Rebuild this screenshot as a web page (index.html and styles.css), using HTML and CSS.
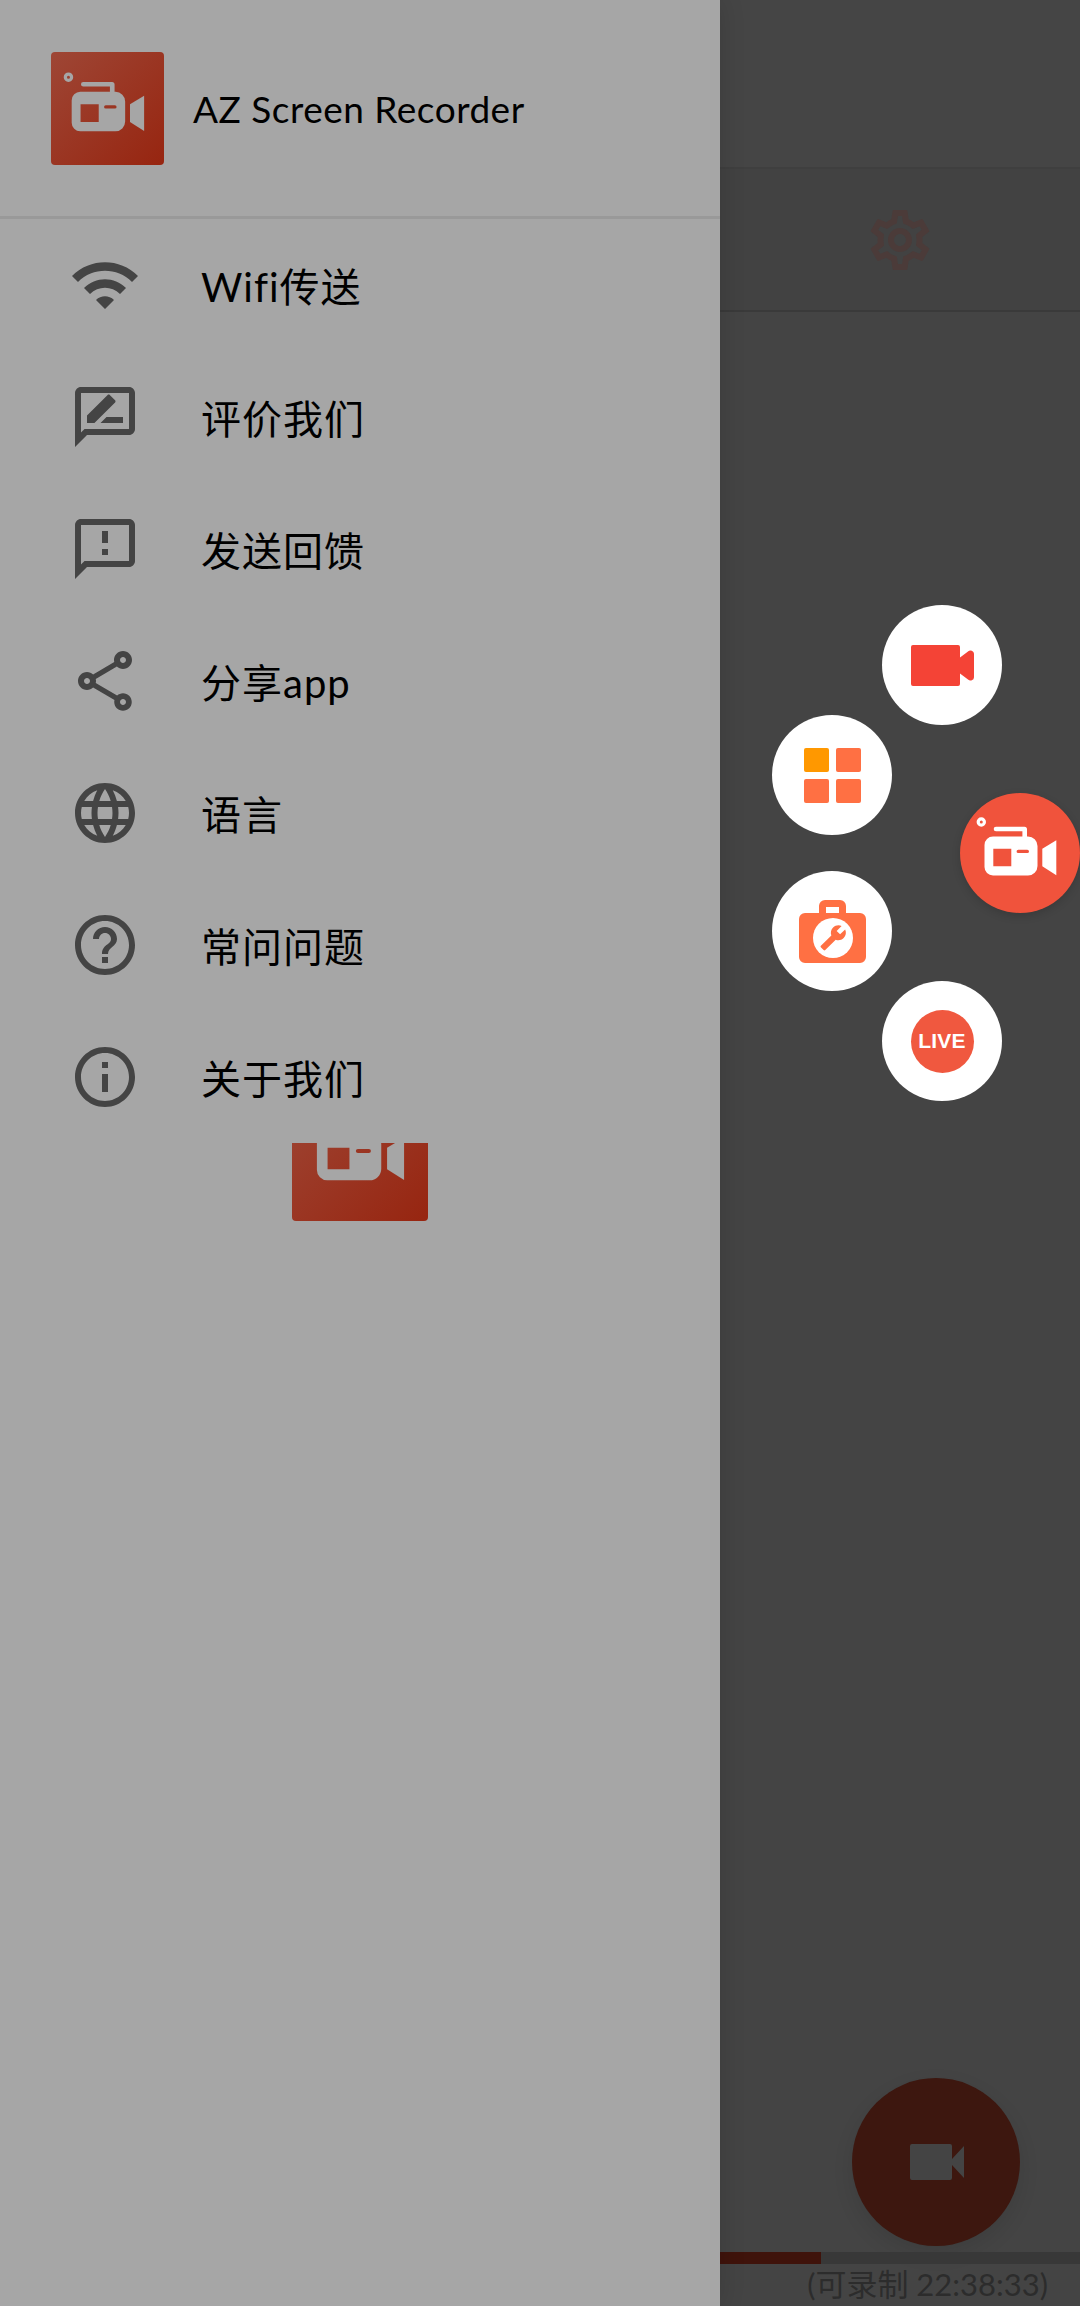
FILE: index.html
```html
<!DOCTYPE html>
<html lang="zh-CN">
  <head>
    <meta charset="UTF-8" />
    <meta name="viewport" content="width=device-width, initial-scale=1.0" />
    <title>AZ Screen Recorder</title>
    <link rel="stylesheet" href="styles.css">
  </head>
  <body>
    <svg class="defs" aria-hidden="true">
      <symbol id="az-cam" viewBox="0 0 112 112">
        <path fill-rule="evenodd" d="M17.3 20.3a4.7 4.7 0 1 0 0 9.4 4.7 4.7 0 0 0 0-9.4zm0 3.2a1.5 1.5 0 1 1 0 3 1.5 1.5 0 0 1 0-3z" />
        <path d="M32 29.7h28.5a2.5 2.5 0 0 1 2.5 2.5V40h-4.6v-5.7H32a2.3 2.3 0 0 1 0-4.6z" />
        <path fill-rule="evenodd" d="M29 39.5h35a9.5 9.5 0 0 1 9.5 9.5v20a9.5 9.5 0 0 1-9.5 9.5H29a8.5 8.5 0 0 1-8.5-8.5V48a8.5 8.5 0 0 1 8.5-8.5zm.3 12.2v17.6h18V51.700zm25 1a1.700 1.700 0 0 0 0 3.400h9a1.700 1.700 0 0 0 0-3.400z" />
        <path d="M78.300 51.700l14-8.400v35l-14-9z" />
      </symbol>
    </svg>

    <div class="screen">
      <aside class="drawer">
        <header class="drawer-head">
          <div class="app-logo"><svg class="cam-mark"><use href="#az-cam" /></svg></div>
          <span class="app-name">AZ Screen Recorder</span>
        </header>
        <ul class="menu">
          <li class="menu-item">
            <svg class="menu-icon" viewBox="0 0 24 24"><path d="M1 9l2 2c4.970-4.970 13.030-4.970 18 0l2-2C16.930 2.930 7.080 2.930 1 9zm8 8l3 3 3-3c-1.650-1.660-4.340-1.660-6 0zm-4-4l2 2c2.760-2.760 7.240-2.760 10 0l2-2C15.140 9.140 8.870 9.140 5 13z" /></svg>
            <span class="menu-label">Wifi传送</span>
          </li>
          <li class="menu-item">
            <svg class="menu-icon" viewBox="0 0 24 24"><path d="M20 2H4c-1.100 0-1.990.9-1.990 2L2 22l4-4h14c1.100 0 2-.9 2-2V4c0-1.100-.9-2-2-2zm0 14H5.170L4 17.170V4h16v12zM6 14v-2.470l6.880-6.880c.2-.2.51-.2.71 0l1.770 1.770c.2.2.2.51 0 .71L8.470 14H6zm12 0h-7.500l2-2H18v2z" /></svg>
            <span class="menu-label">评价我们</span>
          </li>
          <li class="menu-item">
            <svg class="menu-icon" viewBox="0 0 24 24"><path d="M20 2H4c-1.100 0-1.990.9-1.990 2L2 22l4-4h14c1.100 0 2-.9 2-2V4c0-1.100-.9-2-2-2zm0 14H5.170L4 17.170V4h16v12zM11 12h2v2h-2zm0-6h2v4h-2z" /></svg>
            <span class="menu-label">发送回馈</span>
          </li>
          <li class="menu-item">
            <svg class="menu-icon" viewBox="0 0 24 24"><path d="M18 16.080c-.76 0-1.440.3-1.960.77L8.910 12.700c.05-.23.09-.46.09-.7s-.04-.47-.09-.7l7.050-4.110c.54.5 1.250.81 2.040.81 1.660 0 3-1.340 3-3s-1.340-3-3-3-3 1.340-3 3c0 .24.04.47.09.7L8.040 9.810C7.500 9.310 6.790 9 6 9c-1.660 0-3 1.340-3 3s1.340 3 3 3c.79 0 1.500-.31 2.040-.81l7.120 4.160c-.05.21-.08.43-.08.65 0 1.610 1.310 2.920 2.920 2.920 1.610 0 2.920-1.310 2.920-2.920s-1.310-2.920-2.920-2.920zM18 4c.55 0 1 .45 1 1s-.45 1-1 1-1-.45-1-1 .45-1 1-1zM6 13c-.55 0-1-.45-1-1s.45-1 1-1 1 .45 1 1-.45 1-1 1zm12 7.020c-.55 0-1-.45-1-1s.45-1 1-1 1 .45 1 1-.45 1-1 1z" /></svg>
            <span class="menu-label">分享app</span>
          </li>
          <li class="menu-item">
            <svg class="menu-icon" viewBox="0 0 24 24"><path d="M11.990 2C6.470 2 2 6.480 2 12s4.470 10 9.990 10C17.520 22 22 17.520 22 12S17.520 2 11.990 2zm6.930 6h-2.950c-.32-1.250-.78-2.450-1.380-3.560 1.840.63 3.370 1.910 4.330 3.560zM12 4.040c.83 1.200 1.480 2.530 1.910 3.960h-3.820c.43-1.430 1.080-2.760 1.910-3.960zM4.260 14C4.100 13.360 4 12.690 4 12s.1-1.360.26-2h3.380c-.08.66-.14 1.320-.14 2 0 .68.06 1.340.14 2H4.260zm.82 2h2.950c.32 1.250.78 2.450 1.380 3.560-1.840-.63-3.370-1.900-4.330-3.560zm2.950-8H5.080c.96-1.660 2.490-2.930 4.330-3.560C8.810 5.550 8.350 6.750 8.030 8zM12 19.960c-.83-1.200-1.480-2.530-1.910-3.960h3.820c-.43 1.430-1.080 2.760-1.910 3.960zM14.340 14H9.660c-.09-.66-.16-1.320-.16-2 0-.68.07-1.350.16-2h4.680c.09.65.16 1.320.16 2 0 .68-.07 1.340-.16 2zm.25 5.560c.6-1.110 1.060-2.310 1.380-3.560h2.950c-.96 1.650-2.490 2.930-4.330 3.560zM16.360 14c.08-.66.14-1.320.14-2 0-.68-.06-1.340-.14-2h3.380c.16.64.26 1.310.26 2s-.1 1.360-.26 2h-3.380z" /></svg>
            <span class="menu-label">语言</span>
          </li>
          <li class="menu-item">
            <svg class="menu-icon" viewBox="0 0 24 24"><path d="M11 18h2v-2h-2v2zm1-16C6.480 2 2 6.480 2 12s4.480 10 10 10 10-4.480 10-10S17.520 2 12 2zm0 18c-4.410 0-8-3.590-8-8s3.590-8 8-8 8 3.590 8 8-3.590 8-8 8zm0-14c-2.210 0-4 1.790-4 4h2c0-1.100.9-2 2-2s2 .9 2 2c0 2-3 1.750-3 5h2c0-2.250 3-2.500 3-5 0-2.210-1.790-4-4-4z" /></svg>
            <span class="menu-label">常问问题</span>
          </li>
          <li class="menu-item">
            <svg class="menu-icon" viewBox="0 0 24 24"><path d="M11 7h2v2h-2zm0 4h2v6h-2zm1-9C6.480 2 2 6.480 2 12s4.480 10 10 10 10-4.480 10-10S17.520 2 12 2zm0 18c-4.410 0-8-3.590-8-8s3.590-8 8-8 8 3.590 8 8-3.590 8-8 8z" /></svg>
            <span class="menu-label">关于我们</span>
          </li>
        </ul>
        <div class="under-logo">
          <div class="big-logo"><svg class="cam-mark"><use href="#az-cam" /></svg></div>
        </div>
      </aside>

      <main class="pane">
        <div class="pane-top"></div>
        <div class="pane-tabs">
          <svg class="gear" viewBox="0 0 24 24"><path d="M19.430 12.980c.04-.32.07-.64.07-.98 0-.34-.03-.66-.07-.98l2.110-1.650c.19-.15.24-.42.12-.64l-2-3.460c-.09-.16-.26-.25-.44-.25-.06 0-.12.01-.17.03l-2.490 1c-.52-.4-1.080-.73-1.690-.98l-.38-2.650C14.460 2.180 14.250 2 14 2h-4c-.25 0-.46.18-.49.42l-.38 2.650c-.61.25-1.170.59-1.690.98l-2.490-1c-.06-.02-.12-.03-.18-.03-.17 0-.34.09-.43.25l-2 3.460c-.13.22-.07.49.12.64l2.110 1.650c-.04.32-.07.65-.07.98 0 .33.03.66.07.98l-2.110 1.650c-.19.15-.24.42-.12.64l2 3.460c.09.16.26.25.44.25.06 0 .12-.01.17-.03l2.490-1c.52.4 1.080.73 1.690.98l.38 2.650c.03.24.24.42.49.42h4c.25 0 .46-.18.49-.42l.38-2.650c.61-.25 1.170-.59 1.690-.98l2.490 1c.06.02.12.03.18.03.17 0 .34-.09.43-.25l2-3.460c.12-.22.07-.49-.12-.64l-2.110-1.650zm-1.980-1.710c.04.31.05.52.05.73 0 .21-.02.43-.05.73l-.14 1.130.89.7 1.080.84-.7 1.210-1.270-.51-1.040-.42-.9.68c-.43.32-.84.56-1.250.73l-1.060.43-.16 1.130-.2 1.350h-1.400l-.19-1.350-.16-1.130-1.060-.43c-.43-.18-.83-.41-1.230-.71l-.91-.7-1.060.43-1.270.51-.7-1.210 1.080-.84.89-.7-.14-1.130c-.03-.31-.05-.54-.05-.74s.02-.43.05-.73l.14-1.130-.89-.7-1.080-.84.7-1.210 1.270.51 1.040.42.9-.68c.43-.32.84-.56 1.250-.73l1.060-.43.16-1.130.2-1.350h1.390l.19 1.350.16 1.130 1.060.43c.43.18.83.41 1.230.71l.91.7 1.060-.43 1.270-.51.7 1.210-1.070.85-.89.7.14 1.130zM12 8c-2.210 0-4 1.790-4 4s1.790 4 4 4 4-1.790 4-4-1.790-4-4-4zm0 6c-1.100 0-2-.9-2-2s.9-2 2-2 2 .9 2 2-.9 2-2 2z" /></svg>
        </div>
        <div class="pane-body">
          <button class="fab">
            <svg class="fab-icon" viewBox="0 0 54 36"><path d="M2 0h38a2 2 0 0 1 2 2v13L54 2v32L42 21v13a2 2 0 0 1-2 2H2a2 2 0 0 1-2-2V2a2 2 0 0 1 2-2z" /></svg>
          </button>
        </div>
        <div class="progress"><div class="progress-fill" style="width: 28%"></div></div>
        <div class="status">(可录制 22:38:33)</div>
      </main>
    </div>

    <!-- floating recorder menu, sits over the dimmed screen -->
    <div class="bubble bubble-video">
      <svg class="b-video" viewBox="0 0 63 41"><path d="M2 0h45a2 2 0 0 1 2 2v10.500l8-6a3.500 3.500 0 0 1 6 2.500v23a3.500 3.500 0 0 1-6 2.500l-8-6V39a2 2 0 0 1-2 2H2a2 2 0 0 1-2-2V2a2 2 0 0 1 2-2z" /></svg>
    </div>
    <div class="bubble bubble-grid">
      <div class="tiles">
        <span class="tile tile-first"></span>
        <span class="tile"></span>
        <span class="tile"></span>
        <span class="tile"></span>
      </div>
    </div>
    <div class="bubble bubble-tools">
      <svg class="b-tools" viewBox="0 0 67 63"><path fill-rule="evenodd" d="M20 13V6a6 6 0 0 1 6-6h15a6 6 0 0 1 6 6v7h14a6 6 0 0 1 6 6v38a6 6 0 0 1-6 6H6a6 6 0 0 1-6-6V19a6 6 0 0 1 6-6zm7-6v6h13V7z" /><circle class="b-tools-hole" cx="34" cy="38" r="20" /><path d="M22.700 19l-9.100-9.100c.9-2.300.4-5-1.500-6.900-2-2-5-2.400-7.400-1.300L9 6 6 9 1.600 4.700C.4 7.100.9 10.100 2.900 12.100c1.900 1.900 4.600 2.400 6.900 1.500l9.100 9.100c.4.4 1 .4 1.400 0l2.300-2.300c.5-.4.5-1.100.1-1.400z" transform="translate(48 24) scale(-1.150 1.150)" /></svg>
    </div>
    <div class="bubble bubble-live">
      <span class="live-dot">LIVE</span>
    </div>
    <div class="bubble bubble-main">
      <svg class="cam-mark-main"><use href="#az-cam" /></svg>
    </div>
  </body>
</html>
```

FILE: styles.css
```css
body {
  margin: 0;
  width: 1080px;
  height: 2306px;
  overflow: hidden;
  position: relative;
  font-family: "Lato", "Noto Sans CJK SC", sans-serif;
}
.defs {
  display: none;
}
.screen {
  display: flex;
  height: 2306px;
}

/* left drawer */
.drawer {
  width: 720px;
  flex-shrink: 0;
  background: #a6a6a6;
  box-shadow: 0 0 24px rgba(0, 0, 0, 0.14);
  position: relative;
  z-index: 1;
}
.drawer-head {
  height: 216px;
  border-bottom: 3px solid #999;
  display: flex;
  align-items: center;
  gap: 29px;
  padding-left: 51px;
}
.app-logo {
  width: 113px;
  height: 113px;
  border-radius: 4px;
  color: #a6a6a6;
  background: linear-gradient(135deg, #9e4635, #972510);
}
.cam-mark {
  display: block;
  width: 100%;
  height: 100%;
  fill: currentColor;
}
.app-name {
  font-size: 37px;
  color: #000;
  letter-spacing: 0.5px;
}
.menu {
  list-style: none;
  margin: 0;
  padding: 0;
}
.menu-item {
  height: 132px;
  display: flex;
  align-items: center;
  gap: 60px;
  padding-left: 69px;
}
.menu-icon {
  width: 72px;
  height: 72px;
  fill: #444;
}
.menu-label {
  font-size: 40px;
  color: #000;
  letter-spacing: 1px;
}
.under-logo {
  height: 78px;
  overflow: hidden;
  display: flex;
  justify-content: center;
  align-items: flex-end;
}
.big-logo {
  width: 136px;
  height: 136px;
  flex-shrink: 0;
  border-radius: 4px;
  color: #a6a6a6;
  background: linear-gradient(135deg, #9e4635, #972510);
}

/* dimmed screen behind the drawer */
.pane {
  flex: 1;
  display: flex;
  flex-direction: column;
  background: #444;
}
.pane-top {
  height: 167px;
  background: #454545;
  border-bottom: 2px solid #3f3f3f;
}
.pane-tabs {
  height: 141px;
  background: #424242;
  border-bottom: 2px solid #3a3a3a;
  display: flex;
  align-items: center;
  justify-content: center;
}
.gear {
  width: 72px;
  height: 72px;
  fill: #4b3b39;
}
.pane-body {
  flex: 1;
  display: flex;
  align-items: flex-end;
  justify-content: flex-end;
  padding: 0 60px 6px 0;
}
.fab {
  width: 168px;
  height: 168px;
  padding: 0;
  border: none;
  border-radius: 50%;
  background: #3d170f;
  box-shadow: 0 8px 20px rgba(0, 0, 0, 0.1);
  display: flex;
  align-items: center;
  justify-content: center;
}
.fab-icon {
  width: 54px;
  height: 36px;
  fill: #444;
  margin-left: 2px;
}
.progress {
  height: 12px;
  background: #383838;
}
.progress-fill {
  height: 100%;
  background: #3f130b;
}
.status {
  height: 42px;
  text-align: right;
  padding-right: 32px;
  font-size: 31px;
  line-height: 40px;
  color: #2c2c2c;
}

/* floating buttons */
.bubble {
  position: absolute;
  width: 120px;
  height: 120px;
  border-radius: 50%;
  background: #fff;
  z-index: 2;
  display: flex;
  align-items: center;
  justify-content: center;
}
.bubble-video {
  left: 882px;
  top: 605px;
}
.bubble-grid {
  left: 772px;
  top: 715px;
}
.bubble-tools {
  left: 772px;
  top: 871px;
}
.bubble-live {
  left: 882px;
  top: 981px;
}
.bubble-main {
  left: 960px;
  top: 793px;
  background: #f0533c;
  box-shadow: 0 3px 8px rgba(0, 0, 0, 0.15);
}
.b-video {
  width: 63px;
  height: 41px;
  fill: #f44336;
}
.tiles {
  display: grid;
  grid-template-columns: 25px 25px;
  grid-auto-rows: 24px;
  gap: 7px;
}
.tile {
  background: #ff7043;
  border-radius: 2px;
}
.tile-first {
  background: #ff9800;
}
.b-tools {
  width: 67px;
  height: 63px;
  fill: #ff7043;
}
.b-tools-hole {
  fill: #fff;
}
.live-dot {
  width: 63px;
  height: 63px;
  border-radius: 50%;
  background: #f0583f;
  color: #fff;
  font-family: "Liberation Sans", sans-serif;
  font-weight: 700;
  font-size: 21px;
  letter-spacing: 0.2px;
  display: flex;
  align-items: center;
  justify-content: center;
}
.cam-mark-main {
  width: 112px;
  height: 112px;
  fill: #fff;
}
```
